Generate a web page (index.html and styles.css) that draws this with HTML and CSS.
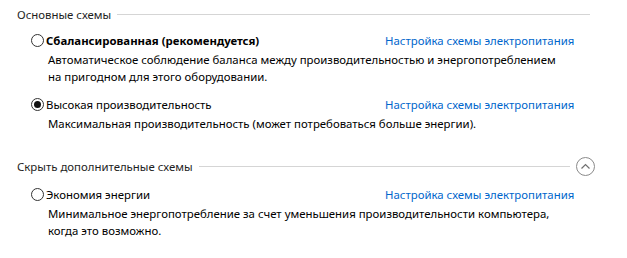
FILE: index.html
```html
<!DOCTYPE html>
<html lang="ru">
<head>
  <meta charset="UTF-8" />
  <title>Электропитание</title>
  <link rel="stylesheet" href="styles.css">
</head>
<body>
  <div class="panel">
    <div class="group-head">
      <span>Основные схемы</span>
      <div class="rule"></div>
    </div>

    <div class="plan">
      <div class="plan-row">
        <label class="radio"><span class="dot"></span><b>Сбалансированная (рекомендуется)</b></label>
        <a href="#">Настройка схемы электропитания</a>
      </div>
      <p class="desc">Автоматическое соблюдение баланса между производительностью и энергопотреблением на пригодном для этого оборудовании.</p>
    </div>

    <div class="plan">
      <div class="plan-row">
        <label class="radio"><span class="dot checked"></span>Высокая производительность</label>
        <a href="#">Настройка схемы электропитания</a>
      </div>
      <p class="desc">Максимальная производительность (может потребоваться больше энергии).</p>
    </div>

    <div class="group-head extra">
      <span>Скрыть дополнительные схемы</span>
      <div class="rule"></div>
      <button class="toggle">
        <svg width="19" height="19" viewBox="0 0 19 19">
          <circle cx="9.5" cy="9.5" r="9" fill="none" stroke="#8a8a8a" stroke-width="1"/>
          <path d="M5.5 11.5 L9.5 7.5 L13.5 11.5" fill="none" stroke="#707070" stroke-width="1.2"/>
        </svg>
      </button>
    </div>

    <div class="plan">
      <div class="plan-row">
        <label class="radio"><span class="dot"></span>Экономия энергии</label>
        <a href="#">Настройка схемы электропитания</a>
      </div>
      <p class="desc">Минимальное энергопотребление за счет уменьшения производительности компьютера, когда это возможно.</p>
    </div>
  </div>
</body>
</html>
```

FILE: styles.css
```css
body {
  margin: 0;
  background: #fff;
  font-family: "Noto Sans", sans-serif;
  font-size: 11.4px;
  color: #000;
}

.panel {
  width: 578px;
  padding: 6px 0 0 17px;
}

.group-head {
  display: flex;
  align-items: center;
  gap: 6px;
  height: 16px;
  color: #1e1e1e;
  margin-bottom: 10px;
}

.group-head .rule {
  flex: 1;
  height: 1px;
  background: #d5d5d5;
  margin-right: 5px;
}

.group-head.extra {
  margin-top: 26px;
  margin-bottom: 12px;
}

.group-head.extra .rule {
  margin-right: 0;
}

.toggle {
  border: none;
  background: none;
  padding: 0;
  width: 19px;
  height: 19px;
}

.plan {
  padding-left: 14px;
  margin-bottom: 11px;
}

.plan-row {
  display: grid;
  grid-template-columns: 354px auto;
  height: 16px;
  align-items: center;
}

.radio {
  display: flex;
  align-items: center;
  gap: 2px;
}

.dot {
  box-sizing: border-box;
  width: 13px;
  height: 13px;
  border: 1px solid #333;
  border-radius: 50%;
  display: flex;
  align-items: center;
  justify-content: center;
}

.dot.checked::after {
  content: "";
  width: 7px;
  height: 7px;
  border-radius: 50%;
  background: #111;
}

.plan-row a {
  color: #0066cc;
  text-decoration: none;
}

.desc {
  margin: 3px 0 0 17px;
  width: 520px;
  line-height: 17px;
}
```
